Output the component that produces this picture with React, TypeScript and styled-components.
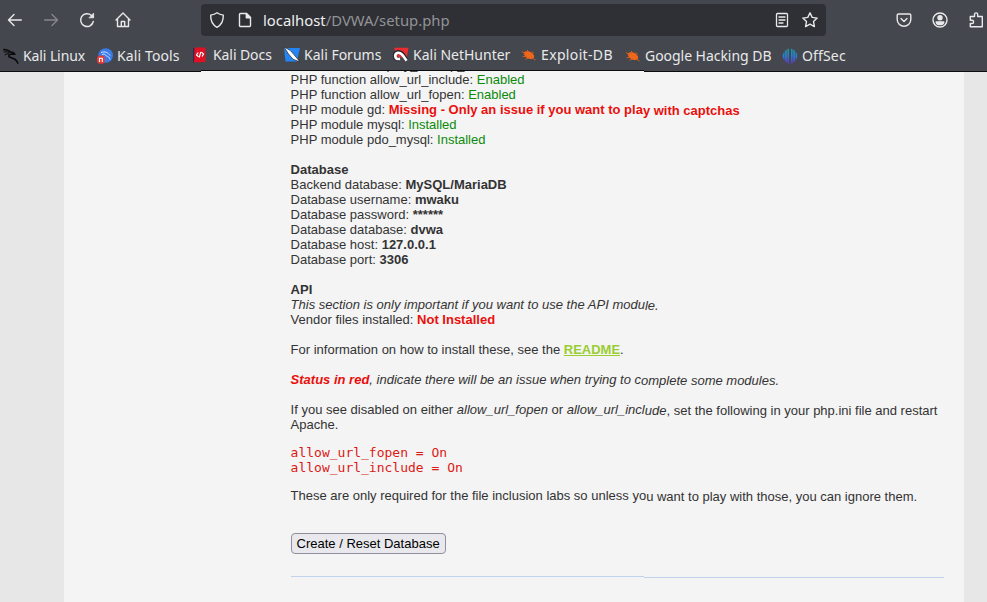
import React from "react";
import styled, { createGlobalStyle } from "styled-components";

const GlobalStyle = createGlobalStyle`
  *, *::before, *::after { box-sizing: border-box; }
  body { margin: 0; background: #e7e7e7; }
`;

const Browser = styled.div`
  width: 987px;
  height: 602px;
  overflow: hidden;
  display: flex;
  flex-direction: column;
  background: #e7e7e7;
`;

const Chrome = styled.header`
  position: relative;
  z-index: 1;
  height: 72px;
  flex: none;
  background:
    linear-gradient(#0c0c0e, #0c0c0e) 201px 70px / 443px 1px no-repeat,
    linear-gradient(#0c0c0e, #0c0c0e) 0 71px / 100% 1px no-repeat,
    #44474e;
  clip-path: polygon(0 0, 100% 0, 100% 100%, 644px 100%, 644px 71px, 201px 71px, 201px 100%, 0 100%);
  font-family: "Noto Sans", sans-serif;
  color: #e9e9ea;
`;

const Toolbar = styled.div`
  height: 40px;
  display: flex;
  align-items: center;
`;

const NavButtons = styled.div`
  width: 201px;
  padding-left: 6px;
  display: flex;
  gap: 18px;
`;

const Icon = styled.svg<{ $dim?: boolean }>`
  display: block;
  flex: none;
  width: 18px;
  height: 18px;
  fill: none;
  stroke: #e9e9ea;
  stroke-width: 1.4;
  stroke-linecap: round;
  stroke-linejoin: round;
  opacity: ${(p) => (p.$dim ? 0.4 : 1)};
`;

const AddressBar = styled.div`
  width: 625px;
  height: 32px;
  padding: 0 7px;
  display: flex;
  align-items: center;
  gap: 10px;
  background: #2f3035;
  border-radius: 4px;
`;

const Url = styled.span`
  flex: 1;
  margin-left: -1px;
  font-size: 14.85px;
  line-height: 20px;
  white-space: nowrap;
  color: #929397;
`;

const Host = styled.span`
  color: #eeeeef;
`;

const Actions = styled.div`
  display: flex;
  gap: 18px;
  padding-left: 69px;
`;

const Bookmarks = styled.nav`
  height: 30px;
  display: flex;
  align-items: flex-start;
  padding: 5px 0 0 3px;
`;

const Bookmark = styled.a<{ $width: number; $drop?: boolean; $track?: number }>`
  flex: none;
  width: ${(p) => p.$width}px;
  margin-top: ${(p) => (p.$drop ? 1 : 0)}px;
  display: flex;
  align-items: center;
  gap: 4px;
  font-size: 14px;
  line-height: 20px;
  letter-spacing: ${(p) => p.$track ?? 0}px;
  white-space: nowrap;
`;

const BookmarkIcon = styled.svg`
  flex: none;
  width: 16px;
  height: 16px;
`;

const Viewport = styled.div`
  flex: 1;
  min-height: 0;
  margin-top: -1px;
  overflow: hidden;
  padding-left: 64px;
`;

const Page = styled.main`
  display: flow-root;
  width: 900px;
  height: 100%;
  padding: 1px 20px 0 226.6px;
  background: #f4f4f4;
  color: #333;
  font: 13px/15px "Liberation Sans", Arial, sans-serif;
`;

const Section = styled.section`
  margin-bottom: 15px;
`;

const Line = styled.div`
  height: 15px;
  white-space: nowrap;
`;

const ScrolledLine = styled(Line)`
  margin-top: -15px;
`;

const Good = styled.span`
  color: #0b8a0b;
`;

const Bad = styled.b`
  color: #ea0f0d;
`;

const Lower = styled.span`
  vertical-align: -1px;
  line-height: 0;
`;

const ReadmeLink = styled.a`
  color: #9acd32;
  font-weight: bold;
  text-decoration: underline;
`;

const Config = styled.pre`
  margin: 13px 0;
  color: #dc1a15;
  font: 13px/15px "DejaVu Sans Mono", monospace;
`;

const ResetButton = styled.button`
  display: block;
  width: 155px;
  height: 21px;
  margin-top: 30px;
  padding: 0;
  border: 1px solid #8f8f9d;
  border-radius: 4px;
  background: #e9e9ed;
  color: #000;
  font: 13px/17px "Liberation Sans", Arial, sans-serif;
`;

const Rule = styled.div`
  display: flex;
  margin-top: 22px;
`;

const RulePart = styled.div<{ $width: number; $drop?: boolean }>`
  width: ${(p) => p.$width}px;
  height: 1px;
  margin-top: ${(p) => (p.$drop ? 1 : 0)}px;
  background: #c0d2ee;
`;

const bug = (
  <>
    <path d="M2.800 5.500C5 3 11 4 13 8.500c.7 2-.6 3.800-3.500 3.600C6 11.800 2.500 9 2.800 5.500z" fill="#ee681c" />
    <path d="M1 4.500L5 7M1.500 9.800l4-.6M6 3l2 2M4.500 12.300l3-1.500M12 11.500l2.500 1.500M11 4.500l1.500 2" stroke="#d95b16" strokeWidth="1" />
  </>
);

const bookmarks = [
  {
    label: "Kali Linux",
    width: 94,
    drop: true,
    track: -0.1,
    icon: (
      <g fill="none" stroke="#0b0b0c" strokeLinecap="round" strokeLinejoin="round">
        <path d="M.8 1.500C4 1.800 6 2.400 7.500 4l2.300.4 2 1.800-2.800-.2C6 6 4.800 8.200 7 9.300c2.800 1.200 6 .8 7.800 5.700" strokeWidth="1.700" />
        <path d="M1 3.800l5.500.3M2 6.800l4-1.600" strokeWidth="1" />
      </g>
    ),
  },
  {
    label: "Kali Tools",
    width: 96,
    drop: true,
    track: 0.12,
    icon: (
      <>
        <circle cx="8.700" cy="7.500" r="7.300" fill="#3a7bea" />
        <path d="M4 4.500c4-1.500 7 0 9 3M5 6.500c2-1 3 0 4 1s3 .5 4 4" fill="none" stroke="#d9e8ff" strokeWidth="1" />
        <rect x="0" y="7.500" width="7.800" height="8.300" rx="3" fill="#e23b37" />
        <path d="M2.500 14v-3.800h2.800V14" fill="none" stroke="#fff" strokeWidth="1.100" />
      </>
    ),
  },
  {
    label: "Kali Docs",
    width: 91,
    track: -0.08,
    icon: (
      <>
        <path d="M0 1.500L2 .5V15l-2 .5z" fill="#262b52" />
        <path d="M1.500.5H12.500V15l-11.500.5z" fill="#e01022" />
        <path d="M5.200 5.500L3.500 8l2 1.800M8.500 5.200l2 2L9 9.500M7.800 5L6.200 10.500" fill="none" stroke="#fff" strokeWidth="1.200" />
      </>
    ),
  },
  {
    label: "Kali Forums",
    width: 109,
    icon: (
      <>
        <path d="M0 1h16l-3 13.500H1.500z" fill="#2384f4" />
        <path d="M0 0l6 3.200 4.200 4.600L16 15l-7-2.800L4.500 7z" fill="#fff" stroke="#20252d" strokeWidth=".7" />
      </>
    ),
  },
  {
    label: "Kali NetHunter",
    width: 128,
    icon: (
      <>
        <path d="M1 .8h14.500l-2 11-9-2z" fill="#ed2b33" />
        <path d="M6 12.300C.8 13 .2 6.500 5 5c3.500-.8 5.500 3 8.500 8.500" fill="none" stroke="#25262b" strokeWidth="4" />
        <path d="M7 11.800C1.500 13 .8 7 5 5.800c3-.6 5 2.700 8.500 7.900" fill="none" stroke="#fff" strokeWidth="2.700" />
      </>
    ),
  },
  { label: "Exploit-DB", width: 104, icon: bug, track: 0.35 },
  { label: "Google Hacking DB", width: 157, icon: bug, drop: true, track: -0.04 },
  {
    label: "OffSec",
    width: 80,
    drop: true,
    track: 0.15,
    icon: (
      <>
        <defs>
          <linearGradient id="offsec" gradientUnits="userSpaceOnUse" x1="0" y1="0" x2="0" y2="16">
            <stop offset="0" stopColor="#189a9b" />
            <stop offset=".5" stopColor="#287ed5" />
            <stop offset="1" stopColor="#6332c7" />
          </linearGradient>
        </defs>
        <path
          d="M7 .5v15H5.400V1.200zM4.800 1.500v13l-1.700-1.200V2.800zM2.500 3.500v9C0 9.500 0 6.500 2.500 3.500zM9 .5v15h1.600V1.200zM11.200 1.500v13l1.700-1.200V2.800zM13.500 3.500v9c2.500-3 2.500-6 0-9z"
          fill="url(#offsec)"
        />
      </>
    ),
  },
];

export default function App() {
  return (
    <Browser>
      <GlobalStyle />
      <Chrome>
        <Toolbar>
          <NavButtons>
            <Icon viewBox="0 0 18 18"><path d="M15.300 9H2.500M8 3.500L2.500 9 8 14.500" /></Icon>
            <Icon viewBox="0 0 18 18" $dim><path d="M2.700 9h12.800M10 3.500L15.500 9 10 14.500" /></Icon>
            <Icon viewBox="0 0 18 18"><path d="M15.300 10.500a6.400 6.400 0 1 1-2-6.200L15 6" /><path d="M15.600 2.500v4.300h-4.300z" fill="#e9e9ea" strokeWidth=".8" /></Icon>
            <Icon viewBox="0 0 18 18"><path d="M2 9L9 2l7 7M3.500 7.800V15.500h11V7.800M7.300 15.500v-5h3.400v5" /></Icon>
          </NavButtons>
          <AddressBar>
            <Icon viewBox="0 0 18 18"><path d="M9 1.800c2 1.500 4 2 6.300 2.300C15.500 10 13.500 14 9 16.300 4.500 14 2.500 10 2.700 4.100 5 3.800 7 3.300 9 1.800z" /></Icon>
            <Icon viewBox="0 0 18 18"><path d="M4.500 2.500h6l4 4v8q0 1-1 1h-9q-1 0-1-1v-11q0-1 1-1z" /><path d="M10.300 2.500v4.200h4.200z" fill="#e9e9ea" /></Icon>
            <Url><Host>localhost</Host>/DVWA/setup.php</Url>
            <Icon viewBox="0 0 18 18"><path d="M4.500 2.500h9q1 0 1 1v11q0 1-1 1h-9q-1 0-1-1v-11q0-1 1-1zM6 6h6M6 9h6M6 12h4" strokeWidth="1.300" /></Icon>
            <Icon viewBox="0 0 18 18"><path d="M9 1.800l2.200 4.600 5 .7-3.700 3.500.9 5L9 13.200l-4.400 2.400.9-5L1.800 7.100l5-.7z" /></Icon>
          </AddressBar>
          <Actions>
            <Icon viewBox="0 0 18 18"><path d="M3.500 3h11q1.300 0 1.300 1.300V8.500a6.800 6.800 0 0 1-13.600 0V4.300Q2.200 3 3.500 3zM6 7.500l3 3 3-3" /></Icon>
            <Icon viewBox="0 0 18 18"><circle cx="9" cy="9" r="7" /><circle cx="9" cy="6.800" r="2" fill="#e9e9ea" /><path d="M5.200 11h7.600c-.8 3.500-6.800 3.500-7.600 0z" fill="#e9e9ea" /></Icon>
            <Icon viewBox="0 0 18 18"><path d="M3.300 5.500H7.500V3.500a1.600 1.600 0 0 1 3.200 0v2H15.300v10.300H3.300V12.500H5a1.600 1.600 0 0 0 0-3.200H3.300z" /></Icon>
          </Actions>
        </Toolbar>
        <Bookmarks>
          {bookmarks.map((b) => (
            <Bookmark key={b.label} $width={b.width} $drop={b.drop} $track={b.track}>
              <BookmarkIcon viewBox="0 0 16 16">{b.icon}</BookmarkIcon>
              {b.label}
            </Bookmark>
          ))}
        </Bookmarks>
      </Chrome>
      <Viewport>
        <Page>
          <Section>
            <ScrolledLine>PHP function display_startup_errors: <Good>Enabled</Good></ScrolledLine>
            <Line>PHP function allow_url_include: <Good>Enabled</Good></Line>
            <Line>PHP function allow_url_fopen: <Good>Enabled</Good></Line>
            <Line>PHP module gd: <Bad>Missing - Only an issue if you want to pla<Lower>y with captchas</Lower></Bad></Line>
            <Line>PHP module mysql: <Good>Installed</Good></Line>
            <Line>PHP module pdo_mysql: <Good>Installed</Good></Line>
          </Section>
          <Section>
            <Line><b>Database</b></Line>
            <Line>Backend database: <b>MySQL/MariaDB</b></Line>
            <Line>Database username: <b>mwaku</b></Line>
            <Line>Database password: <b>******</b></Line>
            <Line>Database database: <b>dvwa</b></Line>
            <Line>Database host: <b>127.0.0.1</b></Line>
            <Line>Database port: <b>3306</b></Line>
          </Section>
          <Section>
            <Line><b>API</b></Line>
            <Line><i>This section is only important if you want to use the API modu<Lower>le.</Lower></i></Line>
            <Line>Vendor files installed: <Bad>Not Installed</Bad></Line>
          </Section>
          <Section>
            <Line>For information on how to install these, see the <ReadmeLink>README</ReadmeLink>.</Line>
          </Section>
          <Section>
            <Line><i><Bad>Status in red</Bad>, indicate there will be an issue when trying to c<Lower>omplete some modules.</Lower></i></Line>
          </Section>
          <Line>If you see disabled on either <i>allow_url_fopen</i> or <i>allow_url_incl</i><Lower><i>ude</i>, set the following in your php.ini file and restart</Lower></Line>
          <Line>Apache.</Line>
          <Config>{"allow_url_fopen = On\nallow_url_include = On"}</Config>
          <Line>These are only required for the file inclusion labs so unless yo<Lower>u want to play with those, you can ignore them.</Lower></Line>
          <ResetButton>Create / Reset Database</ResetButton>
          <Rule>
            <RulePart $width={353} />
            <RulePart $width={300} $drop />
          </Rule>
        </Page>
      </Viewport>
    </Browser>
  );
}
